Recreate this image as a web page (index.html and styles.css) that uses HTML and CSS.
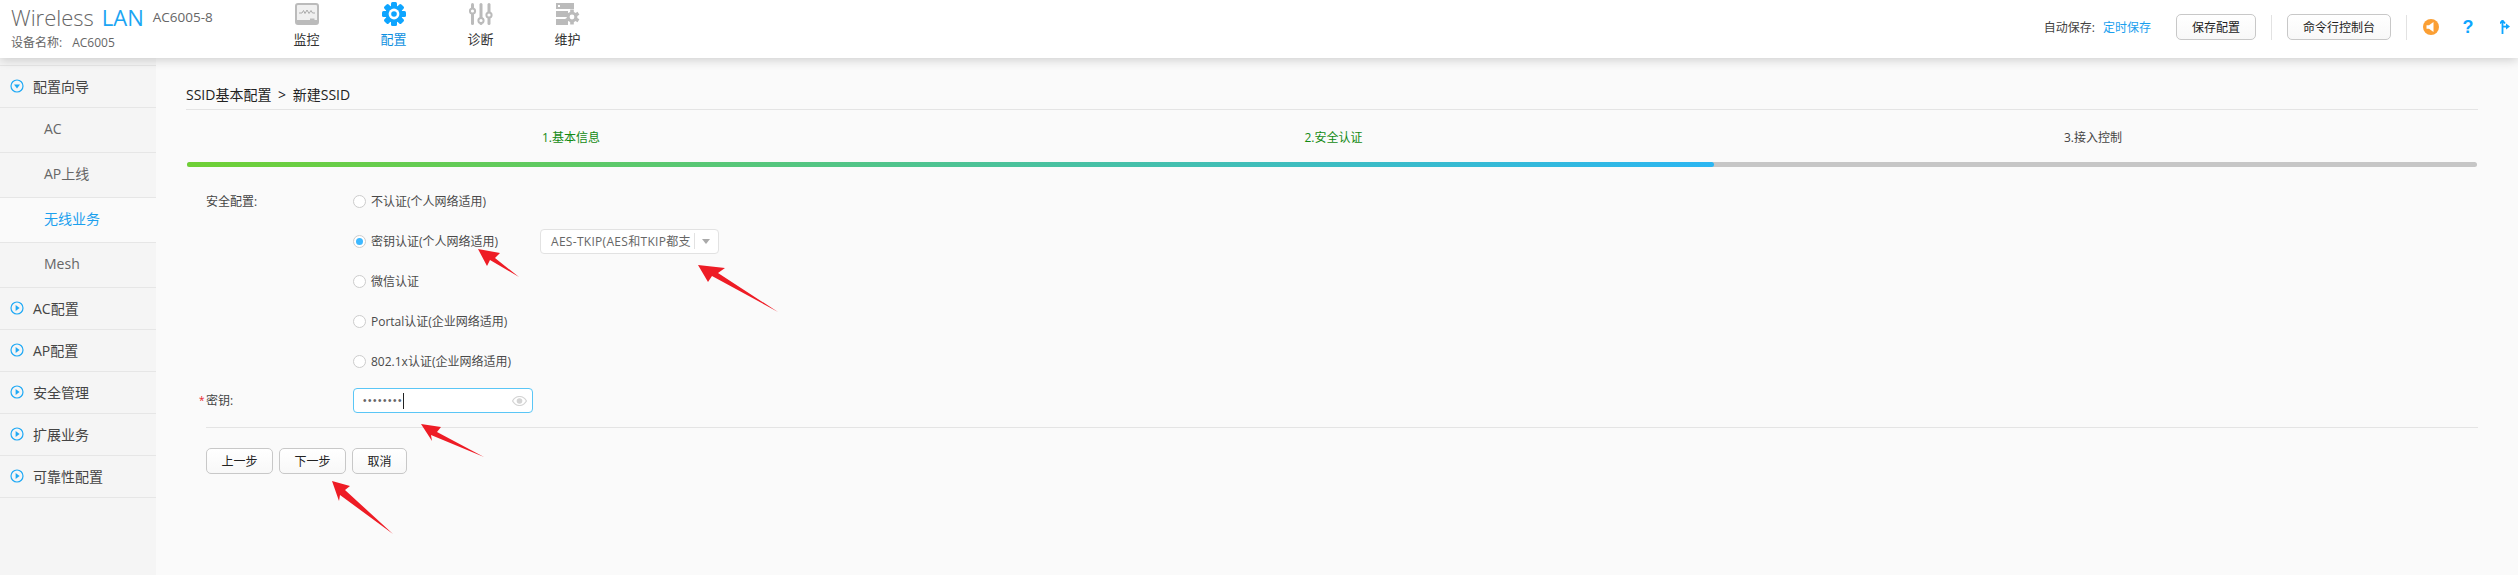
FILE: index.html
```html
<!DOCTYPE html>
<html lang="zh-CN">
<head>
<meta charset="UTF-8">
<meta name="viewport" content="width=device-width, initial-scale=1.0">
<title>Wireless LAN AC6005-8</title>
<link rel="stylesheet" href="styles.css">
</head>
<body>

<svg class="defs" width="0" height="0">
    <symbol id="open" viewBox="0 0 14 14">
        <circle cx="7" cy="7" r="6" fill="none" stroke="#1fa9f5" stroke-width="1.2"/>
        <path d="M5.6 4 L9.6 7 L5.6 10 Z" fill="#1fa9f5"/>
    </symbol>
    <symbol id="down" viewBox="0 0 14 14">
        <circle cx="7" cy="7" r="6" fill="none" stroke="#1fa9f5" stroke-width="1.2"/>
        <path d="M4 5.6 L10 5.6 L7 9.4 Z" fill="#1fa9f5"/>
    </symbol>
</svg>

<header class="topbar">
    <div class="brand">
        <div class="brand-line">
            <span class="brand-name">Wireless</span>
            <span class="brand-lan">LAN</span>
            <span class="brand-model">AC6005-8</span>
        </div>
        <div class="brand-device"><span>设备名称:</span><span>AC6005</span></div>
    </div>
    <nav class="mainnav">
        <a class="nav-item">
            <svg width="24" height="22" viewBox="0 0 24 22">
                <rect x="1" y="1" width="22" height="20" rx="2" fill="#f0f0f0" stroke="#bbb" stroke-width="2"/>
                <path d="M4 10 H7 L8.5 7.5 L10 10.5 L12 7 L14 10.5 L16 7.5 L17.5 10 H20" fill="none" stroke="#aaa" stroke-width="1"/>
                <path d="M1 17 H15 V15.5 H19.5 V17 H23 V21 H1 Z" fill="#bbb"/>
            </svg>
            <span>监控</span>
        </a>
        <a class="nav-item active">
            <svg width="24" height="24" viewBox="0 0 24 24">
                <g fill="#0ea5ff">
                    <rect x="9" y="0" width="6" height="24" rx="1.5"/>
                    <rect x="9" y="0" width="6" height="24" rx="1.5" transform="rotate(45 12 12)"/>
                    <rect x="9" y="0" width="6" height="24" rx="1.5" transform="rotate(90 12 12)"/>
                    <rect x="9" y="0" width="6" height="24" rx="1.5" transform="rotate(135 12 12)"/>
                    <circle cx="12" cy="12" r="8.6"/>
                </g>
                <circle cx="12" cy="12" r="5.4" fill="#fff"/>
                <circle cx="12" cy="12" r="2.8" fill="#0ea5ff"/>
            </svg>
            <span>配置</span>
        </a>
        <a class="nav-item">
            <svg width="24" height="22" viewBox="0 0 24 22">
                <g stroke="#bbb" stroke-width="3" stroke-linecap="round">
                    <path d="M3.5 1.5 V20.5"/>
                    <path d="M12 1.5 V20.5"/>
                    <path d="M20 1.5 V20.5"/>
                </g>
                <g fill="#fff" stroke="#bbb" stroke-width="2">
                    <circle cx="3.5" cy="8" r="2.6"/>
                    <circle cx="12" cy="17.5" r="2.6"/>
                    <circle cx="20" cy="12" r="2.6"/>
                </g>
            </svg>
            <span>诊断</span>
        </a>
        <a class="nav-item">
            <svg width="24" height="22" viewBox="0 0 24 22">
                <g fill="#bbb">
                    <rect x="0" y="0" width="18" height="6"/>
                    <rect x="0" y="8" width="12" height="6"/>
                    <rect x="0" y="16" width="12" height="6"/>
                    <g transform="translate(16 14)">
                        <rect x="-1.8" y="-7.5" width="3.6" height="15"/>
                        <rect x="-1.8" y="-7.5" width="3.6" height="15" transform="rotate(60)"/>
                        <rect x="-1.8" y="-7.5" width="3.6" height="15" transform="rotate(120)"/>
                        <circle r="5.4"/>
                        <circle r="2.4" fill="#fff"/>
                    </g>
                </g>
                <rect x="2" y="2" width="2" height="2" fill="#fff"/>
            </svg>
            <span>维护</span>
        </a>
    </nav>
    <div class="tools">
        <span class="autosave">自动保存:</span>
        <a class="link">定时保存</a>
        <button class="btn save-btn" type="button">保存配置</button>
        <span class="tool-sep"></span>
        <button class="btn" type="button">命令行控制台</button>
        <span class="tool-sep"></span>
        <svg class="tool-speaker" width="16" height="16" viewBox="0 0 16 16">
            <circle cx="8" cy="8" r="8" fill="#fb9f34"/>
            <path d="M3.5 6.2 H6 L10.5 3 V13 L6 9.8 H3.5 Z" fill="#fff"/>
        </svg>
        <span class="tool-help">?</span>
        <svg class="tool-exit" width="10" height="14" viewBox="0 0 10 14">
            <path d="M2.5 14 V1.5 M0 3.5 L2.5 0.5 L5 3.5" fill="none" stroke="#0ea5ff" stroke-width="1.8"/>
            <path d="M2.5 6.6 H7" stroke="#0ea5ff" stroke-width="1.8"/>
            <path d="M6 3.6 L10 6.6 L6 9.6 Z" fill="#0ea5ff"/>
        </svg>
    </div>
</header>

<div class="layout">
    <aside class="sidebar">
        <div class="menu-head"><svg width="14" height="14"><use href="#down"/></svg>配置向导</div>
        <div class="menu-sub">AC</div>
        <div class="menu-sub">AP上线</div>
        <div class="menu-sub current">无线业务</div>
        <div class="menu-sub">Mesh</div>
        <div class="menu-head"><svg width="14" height="14"><use href="#open"/></svg>AC配置</div>
        <div class="menu-head"><svg width="14" height="14"><use href="#open"/></svg>AP配置</div>
        <div class="menu-head"><svg width="14" height="14"><use href="#open"/></svg>安全管理</div>
        <div class="menu-head"><svg width="14" height="14"><use href="#open"/></svg>扩展业务</div>
        <div class="menu-head"><svg width="14" height="14"><use href="#open"/></svg>可靠性配置</div>
    </aside>

    <main class="content">
        <div class="crumb">SSID基本配置 &gt; 新建SSID</div>

        <div class="steps">
            <span class="done step-one">1.基本信息</span>
            <span class="done step-two">2.安全认证</span>
            <span class="step-three">3.接入控制</span>
        </div>
        <div class="progress"><div class="progress-fill"></div></div>

        <form class="wizard">
            <div class="row">
                <div class="row-label">安全配置:</div>
                <label class="radio"><span class="radio-dot"></span>不认证(个人网络适用)</label>
            </div>
            <div class="row">
                <div class="row-label"></div>
                <label class="radio key-radio"><span class="radio-dot on"></span>密钥认证(个人网络适用)</label>
                <div class="select">
                    <span class="select-text">AES-TKIP(AES和TKIP都支</span>
                    <span class="select-arrow"></span>
                </div>
            </div>
            <div class="row">
                <div class="row-label"></div>
                <label class="radio"><span class="radio-dot"></span>微信认证</label>
            </div>
            <div class="row">
                <div class="row-label"></div>
                <label class="radio"><span class="radio-dot"></span>Portal认证(企业网络适用)</label>
            </div>
            <div class="row">
                <div class="row-label"></div>
                <label class="radio"><span class="radio-dot"></span>802.1x认证(企业网络适用)</label>
            </div>
            <div class="row key-row">
                <div class="row-label"><span class="star">*</span>密钥:</div>
                <div class="password">
                    <span class="password-dots">••••••••</span>
                    <span class="caret"></span>
                    <svg class="eye" width="15" height="10" viewBox="0 0 15 10">
                        <path d="M0.5 5 C3 1 5 0.5 7.5 0.5 C10 0.5 12 1 14.5 5 C12 9 10 9.5 7.5 9.5 C5 9.5 3 9 0.5 5 Z" fill="none" stroke="#d4d4d4" stroke-width="1.2"/>
                        <circle cx="7.5" cy="5" r="2.8" fill="#d4d4d4"/>
                    </svg>
                </div>
            </div>
            <div class="actions">
                <button class="btn" type="button">上一步</button>
                <button class="btn" type="button">下一步</button>
                <button class="btn" type="button">取消</button>
            </div>
        </form>
    </main>
</div>

<!-- 标注箭头 -->
<svg class="marks" width="2518" height="575" viewBox="0 0 2518 575">
    <g fill="#ee1c25">
        <polygon points="478,249 500,253 495,258 519,277 490,260 487,266"/>
        <polygon points="698,265 725,268 718,273 778,312 712,276 708,282"/>
        <polygon points="421,424 441,427 437,432 484,457 431,435 432,441"/>
        <polygon points="332,481 350,486 345,490 393,534 340,495 339,501"/>
    </g>
</svg>

</body>
</html>
```

FILE: styles.css
```css
/* Geral */
html, body {
    margin: 0;
    padding: 0;
    height: 575px;
    overflow: hidden;
}
body {
    position: relative;
    font-family: "Open Sans", "Noto Sans CJK SC", sans-serif;
    font-size: 12px;
    color: #333;
    background-color: #fafafa;
}
.defs {
    display: block;
}
.btn {
    height: 26px;
    padding: 0 14.5px;
    font-family: inherit;
    font-size: 12px;
    color: #222;
    background: linear-gradient(#fff, #f8f8f8);
    border: 1px solid #c8c8c8;
    border-radius: 5px;
    box-sizing: border-box;
}

/* Topo */
.topbar {
    position: relative;
    z-index: 2;
    display: flex;
    height: 58px;
    padding-left: 11px;
    background-color: #fff;
    box-shadow: 0 2px 10px rgba(0, 0, 0, 0.18);
    box-sizing: border-box;
}
.brand {
    width: 252px;
    padding-top: 3px;
}
.brand-line {
    display: flex;
    align-items: center;
    height: 28px;
}
.brand-name {
    font-size: 22px;
    font-weight: 300;
    color: #666;
}
.brand-lan {
    margin-left: 8px;
    font-size: 22px;
    color: #1ba5f3;
}
.brand-model {
    margin-left: 9px;
    font-size: 13.5px;
    color: #666;
}
.brand-device {
    display: flex;
    gap: 10px;
    margin-top: 3px;
    line-height: 18px;
    color: #666;
}
.mainnav {
    display: flex;
}
.nav-item {
    display: flex;
    flex-direction: column;
    align-items: center;
    width: 87px;
    padding-top: 2px;
    font-size: 13px;
    color: #333;
}
.nav-item svg {
    height: 24px;
}
.nav-item span {
    margin-top: 4px;
    line-height: 18px;
}
.nav-item.active {
    color: #0b8fe0;
}
.tools {
    display: flex;
    align-items: center;
    margin-left: auto;
    height: 54px;
}
.autosave {
    color: #444;
}
.link {
    margin-left: 8px;
    color: #1ba0ee;
}
.save-btn {
    margin-left: 25px;
}
.tools .btn {
    padding: 0;
    width: 80px;
}
.tools .btn:nth-of-type(2) {
    width: 104px;
}
.tool-sep {
    width: 1px;
    height: 25px;
    margin: 0 15px;
    background-color: #e2e2e2;
}
.tool-speaker {
    margin-left: 1px;
}
.tool-help {
    margin-left: 23px;
    width: 12px;
    font-family: "Liberation Sans", sans-serif;
    font-size: 18px;
    font-weight: bold;
    line-height: 16px;
    text-align: center;
    color: #0ea5ff;
}
.tool-exit {
    margin-left: 26px;
    margin-right: 8px;
}

/* Menu lateral */
.layout {
    display: flex;
    height: 517px;
}
.sidebar {
    width: 156px;
    padding-top: 7px;
    background-color: #f5f5f5;
    box-sizing: border-box;
    font-size: 14px;
}
.menu-head {
    display: flex;
    align-items: center;
    gap: 9px;
    height: 42px;
    padding-left: 10px;
    padding-bottom: 2px;
    color: #444;
    border-top: 1px solid #e6e6e6;
    box-sizing: border-box;
}
.menu-head svg {
    flex: none;
}
.menu-head:last-child {
    height: 43px;
    border-bottom: 1px solid #e6e6e6;
}
.menu-sub {
    height: 45px;
    line-height: 42px;
    padding-left: 44px;
    color: #666;
    border-top: 1px solid #e6e6e6;
    box-sizing: border-box;
}
.menu-sub.current {
    color: #1ba0ee;
    background-color: #fafafa;
}

/* Conteudo */
.content {
    flex: 1;
    padding: 26px 40px 0 30px;
    box-sizing: border-box;
}
.crumb {
    height: 25px;
    line-height: 22px;
    font-size: 14px;
    word-spacing: 3px;
    color: #222;
    border-bottom: 1px solid #e4e4e4;
}
.steps {
    display: grid;
    grid-template-columns: 1fr 1fr 1fr;
    margin-top: 18px;
    line-height: 20px;
    text-align: center;
    color: #444;
}
.steps .done {
    color: #138a13;
}
.step-one {
    padding-left: 6px;
}
.step-two {
    padding-left: 3px;
}
.step-three {
    padding-right: 6px;
}
.progress {
    height: 5px;
    margin: 14px 1px 0;
    background-color: #c6c6c6;
    border-radius: 3px;
}
.progress-fill {
    width: 66.67%;
    height: 100%;
    background: linear-gradient(90deg, #6fd035, #2bb6f2);
    border-radius: 3px;
}

/* Formulario */
.wizard {
    padding: 14px 0 0 20px;
}
.row {
    display: flex;
    align-items: center;
    height: 40px;
}
.row-label {
    position: relative;
    width: 147px;
    flex: none;
    color: #444;
}
.star {
    position: absolute;
    left: -7px;
    font-size: 10px;
    color: #e8202a;
}
.radio {
    display: flex;
    align-items: center;
    gap: 5px;
    color: #4a4a4a;
}
.key-radio {
    width: 187px;
}
.radio-dot {
    display: block;
    position: relative;
    width: 13px;
    height: 13px;
    background-color: #fff;
    border: 1px solid #ccc;
    border-radius: 50%;
    box-sizing: border-box;
}
.radio-dot.on::after {
    content: "";
    position: absolute;
    left: 2px;
    top: 2px;
    width: 7px;
    height: 7px;
    background-color: #3db8ff;
    border-radius: 50%;
}
.select {
    display: flex;
    align-items: center;
    width: 179px;
    height: 25px;
    background-color: #fff;
    border: 1px solid #e2e2e2;
    border-radius: 4px;
    box-sizing: border-box;
}
.select-text {
    margin-left: 10px;
    white-space: nowrap;
    letter-spacing: 0.3px;
    color: #666;
}
.select-arrow {
    position: relative;
    height: 16px;
    width: 24px;
    margin-left: auto;
    box-sizing: border-box;
    border-left: 1px solid #e2e2e2;
}
.select-arrow::after {
    content: "";
    position: absolute;
    left: 7px;
    top: 6px;
    border-left: 4px solid transparent;
    border-right: 4px solid transparent;
    border-top: 5px solid #aaa;
}
.key-row {
    height: 47px;
    border-bottom: 1px solid #e4e4e4;
    align-items: flex-start;
    padding-top: 7px;
    box-sizing: border-box;
}
.key-row .row-label {
    line-height: 25px;
}
.password {
    display: flex;
    align-items: center;
    width: 180px;
    height: 25px;
    padding: 0 4px 0 9px;
    background-color: #fff;
    border: 1px solid #5ac6f6;
    border-radius: 4px;
    box-sizing: border-box;
}
.password-dots {
    font-family: "Liberation Sans", sans-serif;
    font-size: 10px;
    letter-spacing: 1.5px;
    color: #666;
}
.caret {
    width: 1px;
    height: 16px;
    background-color: #222;
}
.eye {
    margin-left: auto;
    margin-right: 1px;
}
.actions {
    display: flex;
    gap: 6px;
    margin-top: 20px;
}

/* Setas de anotacao */
.marks {
    position: absolute;
    left: 0;
    top: 0;
    z-index: 3;
    pointer-events: none;
}
```
